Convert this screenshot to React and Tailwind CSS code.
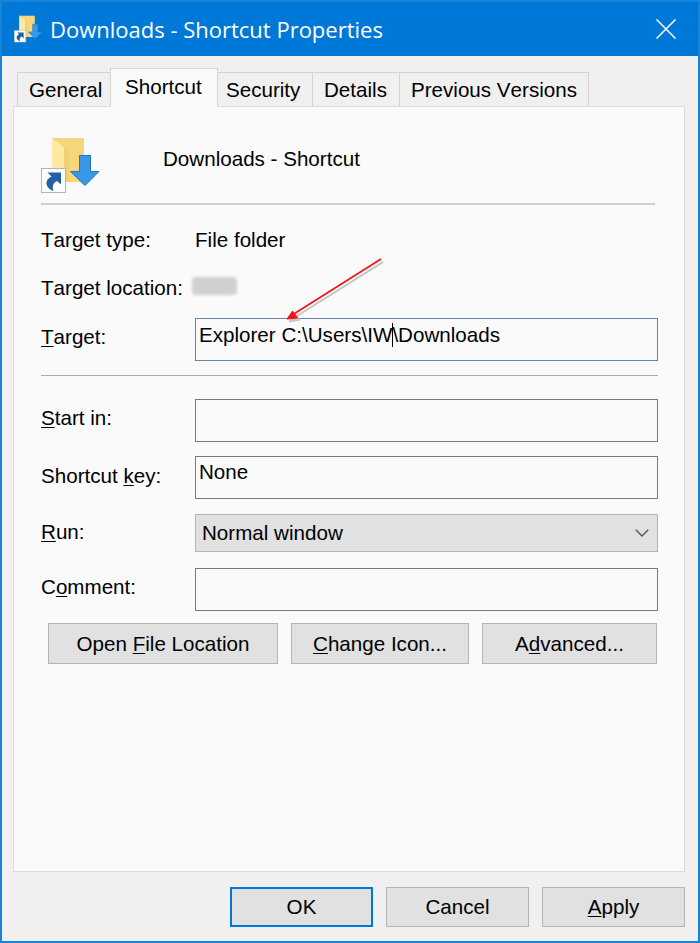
import React from 'react';

function ShortcutBadge() {
  return (
    <g>
      <rect x="0.5" y="31.5" width="24" height="24" fill="#fdfdfd" stroke="#b4b4b4" />
      <path d="M6.500 35.500H20V47.500L16 44C12 46 11 49 12.500 54C4 51 3 43 10.500 39.500Z" fill="#2461a4" />
    </g>
  );
}

function FolderIcon({ className }) {
  return (
    <svg viewBox="0 0 60 57" className={className}>
      <path d="M11 1H43V45H11Z" fill="#f6d67b" />
      <path d="M11 1L23 9V45H11Z" fill="#fde8a4" />
      <path d="M11 1L23 9V45H28V16L14 1Z" fill="#f2cf70" />
      <path d="M38.500 18.500H49.500V34.500H58L44 48.500L29.500 34.500H38.500Z" fill="#3898e8" stroke="#1f78c6" />
      <ShortcutBadge />
    </svg>
  );
}

function Key({ children }) {
  return <span className="underline decoration-1 underline-offset-[2px]">{children}</span>;
}

function Tab({ className, children }) {
  return (
    <div className={`h-[34px] border border-[#d4d4d4] bg-[#f0f0f0] pt-[5px] ${className}`}>{children}</div>
  );
}

function Row({ label, className, labelClass = '', children }) {
  return (
    <div className={`flex items-center ${className}`}>
      <div className={`w-[154px] shrink-0 whitespace-nowrap ${labelClass}`}>{label}</div>
      {children}
    </div>
  );
}

function Field({ className = 'border-[#7a7a7a] pt-[3px]', children }) {
  return <div className={`h-[43px] w-[463px] border pl-[3px] ${className}`}>{children}</div>;
}

function Button({ className, children }) {
  return (
    <button className={`flex items-center justify-center bg-[#e1e1e1] ${className}`}>
      <span>{children}</span>
    </button>
  );
}

export default function App() {
  return (
    <div className="relative flex h-[943px] w-[700px] flex-col overflow-hidden border-2 border-[#1883d7] bg-[#f0f0f0] font-['Liberation_Sans',Arial,sans-serif] text-[20.6px] leading-[24px] text-black [font-kerning:none]">
      <header className="flex h-[54px] shrink-0 items-center bg-[#0078d7] pl-3 pr-[22px] text-white">
        <FolderIcon className="h-[28px] w-[29px]" />
        <h1 className="ml-[7px] flex-1 whitespace-nowrap font-['Open_Sans',sans-serif] text-[22px]">
          Downloads - Shortcut Properties
        </h1>
        <svg viewBox="0 0 20 20" className="-mt-px h-5 w-5" fill="none" stroke="white" strokeWidth="1.5">
          <path d="M0.500 0.500L19.500 19.500M19.500 0.500L0.500 19.500" />
        </svg>
      </header>

      <nav className="flex h-[50px] shrink-0 items-end whitespace-nowrap pl-[15px]">
        <Tab className="w-[93px] border-b-0 border-r-0 pl-[11px]">General</Tab>
        <div className="z-10 -mb-px h-[39px] w-[108px] border border-b-0 border-[#d4d4d4] bg-[#fafafa] pl-[14px] pt-[6px]">
          Shortcut
        </div>
        <Tab className="w-[94px] border-x-0 border-b-0 pl-[8px]">Security</Tab>
        <Tab className="w-[87px] border-b-0 border-r-0 pl-[11px]">Details</Tab>
        <Tab className="w-[190px] border-b-0 pl-[11px]">Previous Versions</Tab>
      </nav>

      <main className="ml-[11px] h-[766px] w-[672px] shrink-0 border border-[#dcdcdc] bg-[#fafafa] pl-[27px]">
        <section className="flex h-[98px] w-[614px] items-start border-b-2 border-[#cfcfcf]">
          <FolderIcon className="mt-[30px] h-[57px] w-[60px]" />
          <div className="ml-[62px] mt-[40px]">Downloads - Shortcut</div>
        </section>
        <Row label="Target type:" className="mt-[23px] h-6">File folder</Row>
        <Row label="Target location:" className="mt-6 h-6">
          <div className="-ml-[3px] mb-1 h-[18px] w-[45px] rounded bg-[#d0d0d0] blur-[1.5px]" />
        </Row>
        <Row label={<><Key>T</Key>arget:</>} labelClass="pb-[6px]" className="mt-[18px] h-[43px]">
          <Field className="border-[#6585a3] pt-1">
            Explorer C:\Users\IW
            <span className="-mr-px inline-block h-[24px] w-px bg-black align-top" />
            \Downloads
          </Field>
        </Row>
        <div className="mt-[14px] h-px w-[617px] bg-[#acacac]" />
        <Row label={<><Key>S</Key>tart in:</>} labelClass="pb-[6px]" className="mt-[23px] h-[43px]"><Field /></Row>
        <Row label={<>Shortcut <Key>k</Key>ey:</>} labelClass="pb-[4px]" className="mt-[14px] h-[43px]"><Field>None</Field></Row>
        <Row label={<><Key>R</Key>un:</>} labelClass="pb-[2px]" className="mt-[15px] h-[38px]">
          <div className="flex h-[38px] w-[463px] items-center justify-between border border-[#b3b3b3] bg-[#e1e1e1] pl-[6px] pr-[8px]">
            <span>Normal window</span>
            <svg viewBox="0 0 14 8" className="h-2 w-[14px]" fill="none" stroke="#555" strokeWidth="1.4">
              <path d="M0.800 0.800L7 7L13.200 0.800" />
            </svg>
          </div>
        </Row>
        <Row label={<>C<Key>o</Key>mment:</>} labelClass="pb-[6px]" className="mt-4 h-[43px]"><Field /></Row>
        <div className="ml-[7px] mt-3 flex">
          <Button className="h-[41px] w-[230px] border border-[#b3b3b3]">Open <Key>F</Key>ile Location</Button>
          <Button className="ml-[13px] h-[41px] w-[178px] border border-[#b3b3b3]">
            <Key>C</Key>hange Icon...
          </Button>
          <Button className="ml-[13px] h-[41px] w-[175px] border border-[#b3b3b3]">A<Key>d</Key>vanced...</Button>
        </div>
      </main>

      <footer className="mt-[15px] flex justify-end gap-[13px] pr-[13px]">
        <Button className="h-10 w-[143px] border-2 border-[#0078d7]">OK</Button>
        <Button className="h-10 w-[143px] border border-[#b3b3b3]">Cancel</Button>
        <Button className="h-10 w-[143px] border border-[#b3b3b3]"><Key>A</Key>pply</Button>
      </footer>

      <svg viewBox="0 0 104 70" className="absolute left-[281px] top-[253px] h-[70px] w-[104px]">
        <g transform="translate(2 3)" fill="#c4c4c4" stroke="#c4c4c4">
          <path d="M98 4L12 58" strokeWidth="2" />
          <path d="M4 64L10 55L15 62Z" />
        </g>
        <path d="M98 4L10 59.500" stroke="#f51414" strokeWidth="1.700" />
        <path d="M4 64L9.500 56L14.500 63Z" fill="#f51414" stroke="#f51414" />
      </svg>
    </div>
  );
}
